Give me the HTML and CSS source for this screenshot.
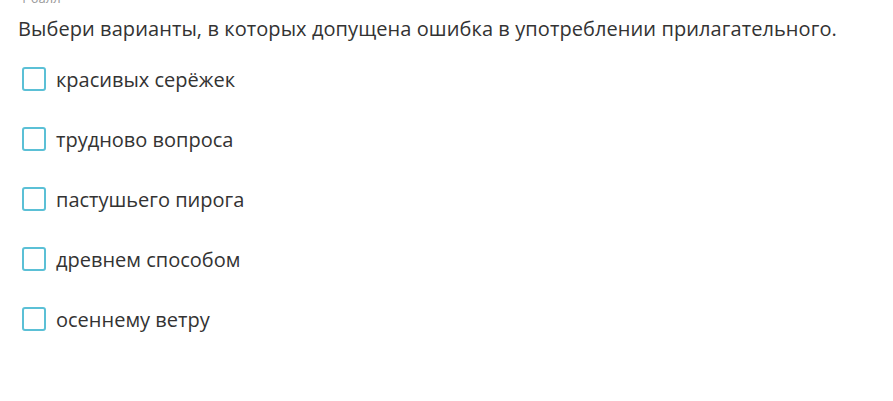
FILE: index.html
```html
<!DOCTYPE html>
<html lang="ru">
<head>
<meta charset="UTF-8">
<title>Задание</title>
<link rel="stylesheet" href="styles.css">
</head>
<body>
<div class="task">
    <div class="points">1 балл</div>
    <p class="question">Выбери варианты, в которых допущена ошибка в употреблении прилагательного.</p>
    <ul class="options">
        <li class="option"><span class="box"></span><span class="label">красивых серёжек</span></li>
        <li class="option"><span class="box"></span><span class="label">трудново вопроса</span></li>
        <li class="option"><span class="box"></span><span class="label">пастушьего пирога</span></li>
        <li class="option"><span class="box"></span><span class="label">древнем способом</span></li>
        <li class="option"><span class="box"></span><span class="label">осеннему ветру</span></li>
    </ul>
</div>
</body>
</html>
```

FILE: styles.css
```css
body {
    margin: 0;
    background-color: #fff;
    font-family: "Open Sans", sans-serif;
    color: #333;
}
.task {
    padding: 0 18px;
}
.points {
    font-size: 13px;
    color: #999;
    line-height: 16px;
    margin-top: -10px;
    padding-left: 2px;
}
.question {
    margin: 9px 0 0;
    font-size: 20px;
    line-height: 28px;
    letter-spacing: 0.08px;
}
.options {
    list-style: none;
    margin: 6px 0 0;
    padding: 0;
}
.option {
    display: flex;
    align-items: center;
    height: 60px;
}
.box {
    width: 20px;
    height: 20px;
    border: 2px solid #5bc0d6;
    border-radius: 3px;
    margin-left: 4px;
    margin-right: 10px;
}
.label {
    font-size: 20px;
}
```
